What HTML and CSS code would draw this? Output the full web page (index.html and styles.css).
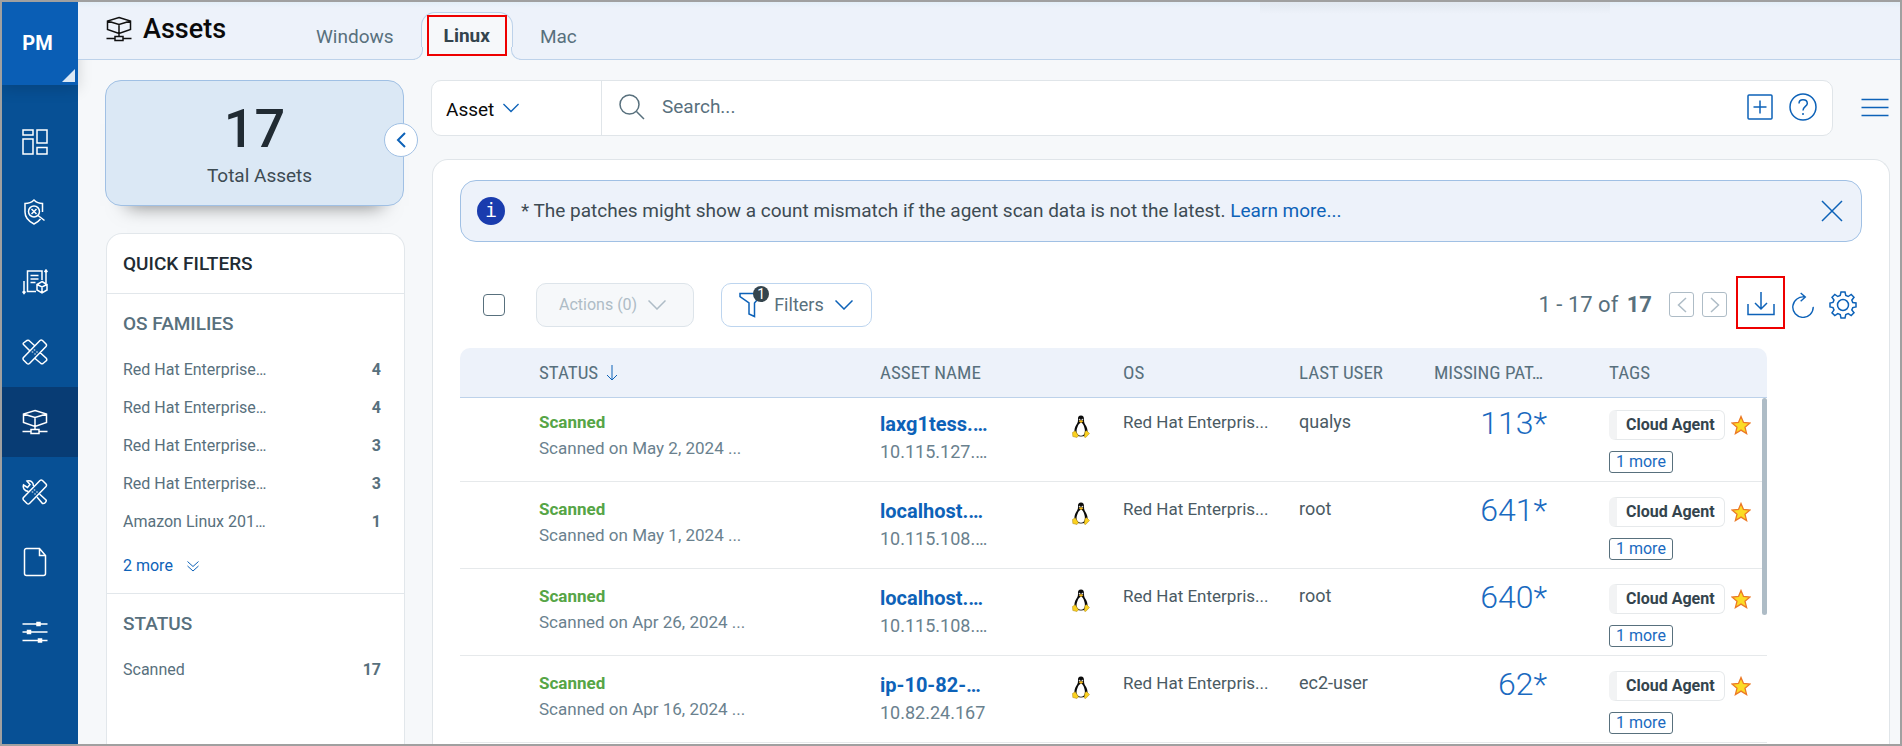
FILE: index.html
```
<!DOCTYPE html>
<html lang="en">
<head>
    <meta charset="UTF-8">
    <meta name="viewport" content="width=device-width, initial-scale=1.0">
    <title>Assets</title>
    <link rel="stylesheet" href="styles.css">
</head>
<body>

    <!-- shared icons -->
    <svg class="sprite" aria-hidden="true">
        <symbol id="asset" viewBox="0 0 26 26">
            <path d="M13 1.500L24.500 5v8.500L13 17.500 1.500 13.500V5zM1.500 5L13 8.500 24.500 5M13 8.500V20.500M9 20.500h8v4H9zM0.500 22.500H9M17 22.500h8.500"/>
        </symbol>
        <symbol id="chevron" viewBox="0 0 18 10">
            <path d="M0.500 0.500L9 9 17.500 0.500"/>
        </symbol>
        <symbol id="star" viewBox="0 0 20 20">
            <path d="M10 1.500l2.500 6 6.500 0.500-5 4.200 1.600 6.300L10 15.100 4.400 18.500 6 12.200 1 8l6.500-0.500z" fill="#fbdc25" stroke="#ec7a26" stroke-width="1.300"/>
        </symbol>
        <symbol id="linux" viewBox="0 0 18 23">
            <path d="M9 0.500c-2.300 0-3.200 1.600-3 4 .1 2.600-.6 3.600-1.800 5.500C3 12 2.200 14.500 2.500 17c1 3 3.500 4.500 6.500 4.500s5.500-1.500 6.500-4.500c.3-2.500-.7-5-2-7-1.200-1.900-1.500-3-1.500-5.500 0-2.400-.8-4-3-4z" fill="#0b0b0b"/>
            <path d="M9 7.800c-1.500.2-2.500 1.800-3.300 3.700-1 2.300-1.500 4.500-.9 6.500.8 2 2.300 2.700 4.200 2.700s3-.7 3.700-2.700c.5-2 .1-4.200-.7-6.500C11.300 9.600 10.500 7.900 9 7.800z" fill="#fff"/>
            <circle cx="7.600" cy="4.600" r="0.900" fill="#ddd"/>
            <circle cx="10.400" cy="4.600" r="0.900" fill="#ddd"/>
            <path d="M6.800 6.200L9 5l2.400 1.200L9 8z" fill="#f3b91f"/>
            <path d="M0.500 17.500l2.700-1.800 3.300 5-1.500 1.800-4.200-1zM17.500 18.500l-2.800-2.800-1.700.8-.8 5.500 1.500.5z" fill="#fbd11f" stroke="#a9851a" stroke-width="0.500"/>
        </symbol>
    </svg>

    <div class="app">

    <nav class="sidebar">
        <button class="module" type="button">PM</button>
        <a href="#" class="side-link" aria-label="Dashboard">
            <svg viewBox="0 0 26 26"><path d="M1 1h10v5H1zM15 1h10v13H15zM1 10h10v15H1zM15 18.500h10V25H15z"/></svg>
        </a>
        <a href="#" class="side-link" aria-label="Vulnerabilities">
            <svg viewBox="0 0 26 26"><path d="M20.500 13V4.500C16 4.500 14 3 12 1 10 3 7 4.500 3 4.500V13c0 6 4 9.500 9 12 2.500-1.200 5-3 6.500-5"/><circle cx="12" cy="12.500" r="5.500"/><path d="M9.500 10l5 5M14.500 10l-5 5M16 16.500l6.500 5"/></svg>
        </a>
        <a href="#" class="side-link" aria-label="Reports">
            <svg viewBox="0 0 26 26"><path d="M14 22.500H5.500V2H20v9M8.500 6.500h8M8.500 10h8M8.500 13.500h5M2 12v12M0.500 22.500L2 24.500l1.500-2M24 14V1.500M22.500 3L24 1l1.500 2"/><path d="M20 12.500l5 3v5.500l-5 3-5-3v-5.500zM15 15.500l5 2.500 5-2.500M20 18v6"/></svg>
        </a>
        <a href="#" class="side-link" aria-label="Patches">
            <svg viewBox="0 0 26 26"><path d="M5 24.500L1.500 21a2 2 0 0 1 0-2.500L18 1.500a2 2 0 0 1 2.500 0L24 5a2 2 0 0 1 0 2.500L7.500 24.500a2 2 0 0 1-2.500 0zM8 12L1.500 5.500a1 1 0 0 1 0-1.500L5 1.500a2 2 0 0 1 2 0L13 7M18 13.500l6.500 6a2 2 0 0 1 0 2L21 24.500a2 2 0 0 1-2 0L12.500 19"/><path d="M12.500 10.500v1M10.500 12.500v1M15 12.500v1M13 14.500v1"/></svg>
        </a>
        <a href="#" class="side-link active" aria-label="Assets">
            <svg><use href="#asset"/></svg>
        </a>
        <a href="#" class="side-link" aria-label="Jobs">
            <svg viewBox="0 0 26 26"><path d="M5 24.500L1.500 21a2 2 0 0 1 0-2.500L18 1.500a2 2 0 0 1 2.500 0L24 5a2 2 0 0 1 0 2.500L7.500 24.500a2 2 0 0 1-2.500 0z"/><path d="M6.500 12.500C2.500 12 0.500 9 1.500 6l4 2.500 2.500-3-3-3.500c3.500-1.200 6.500 1 6.500 5M17.500 15l6.500 6c1 1.500-1.500 4-3.500 3.500L15 18"/><path d="M12.500 10.500v1M10.500 12.500v1M15 12.500v1M13 14.500v1"/></svg>
        </a>
        <a href="#" class="side-link" aria-label="Documents">
            <svg class="tall" viewBox="0 0 26 30"><path d="M4.500 1.500h13l6 7v18a2 2 0 0 1-2 2h-17a2 2 0 0 1-2-2v-23a2 2 0 0 1 2-2zM17.500 1.500v7h6"/></svg>
        </a>
        <a href="#" class="side-link" aria-label="Configuration">
            <svg viewBox="0 0 26 26"><path d="M0.500 5h25M0.500 13h25M0.500 21.500h25"/><path d="M15 3.500h3v3h-3zM5.500 11.500h3v3h-3zM16.500 20h3v3h-3z" fill="#fff"/></svg>
        </a>
    </nav>

    <div class="page">
        <header class="topbar">
            <h1 class="title"><svg class="title-icon"><use href="#asset"/></svg>Assets</h1>
            <nav class="tabs">
                <a href="#" class="tab">Windows</a>
                <div class="tab-active"><a href="#" class="marked">Linux</a></div>
                <a href="#" class="tab">Mac</a>
            </nav>
        </header>

        <div class="content">
            <aside class="left">
                <div class="total">
                    <strong>17</strong>
                    <span>Total Assets</span>
                    <button class="collapse" type="button" aria-label="Collapse">
                        <svg viewBox="0 0 10 16"><path d="M9 1L2 8l7 7"/></svg>
                    </button>
                </div>

                <div class="filters">
                    <h2>QUICK FILTERS</h2>
                    <section>
                        <h3>OS FAMILIES</h3>
                        <ul>
                            <li><a href="#">Red Hat Enterprise…</a><b>4</b></li>
                            <li><a href="#">Red Hat Enterprise…</a><b>4</b></li>
                            <li><a href="#">Red Hat Enterprise…</a><b>3</b></li>
                            <li><a href="#">Red Hat Enterprise…</a><b>3</b></li>
                            <li><a href="#">Amazon Linux 201…</a><b>1</b></li>
                        </ul>
                        <a href="#" class="more">2 more <svg viewBox="0 0 12 11"><path d="M0.500 0.500L6 5.500l5.500-5M0.500 5L6 10l5.500-5"/></svg></a>
                    </section>
                    <section>
                        <h3>STATUS</h3>
                        <ul>
                            <li><a href="#">Scanned</a><b>17</b></li>
                        </ul>
                    </section>
                </div>
            </aside>

            <main class="main">
                <div class="search-row">
                    <div class="search">
                        <label class="scope">
                            <select aria-label="Search in">
                                <option>Asset</option>
                            </select>
                            <svg class="chev"><use href="#chevron"/></svg>
                        </label>
                        <svg class="icon lens" viewBox="0 0 26 26"><circle cx="10.500" cy="10.500" r="9.500"/><path d="M17.500 17.500l7.500 7.500"/></svg>
                        <input type="text" placeholder="Search..." aria-label="Search">
                        <button class="icon-btn" type="button" aria-label="Add">
                            <svg viewBox="0 0 26 26"><rect x="1" y="1" width="24" height="24" rx="1"/><path d="M13 6.500v13M6.500 13h13"/></svg>
                        </button>
                        <button class="icon-btn" type="button" aria-label="Help">
                            <svg class="big" viewBox="0 0 28 28"><circle cx="14" cy="14" r="13"/><path d="M10 10.500c0-2.500 1.800-3.700 4-3.700s4.300 1.200 4.300 3.700c0 3-4.300 3-4.300 7M14 20v2"/></svg>
                        </button>
                    </div>
                    <button class="icon-btn" type="button" aria-label="Menu">
                        <svg class="big" viewBox="0 0 28 28"><path d="M0.500 5.500h27M0.500 13.500h27M0.500 21.500h27"/></svg>
                    </button>
                </div>

                <div class="card">
                    <div class="banner">
                        <span class="info">i</span>
                        <p>* The patches might show a count mismatch if the agent scan data is not the latest. <a href="#">Learn more...</a></p>
                        <button class="icon-btn" type="button" aria-label="Close">
                            <svg class="close" viewBox="0 0 22 22"><path d="M1 1l20 20M21 1L1 21"/></svg>
                        </button>
                    </div>

                    <div class="toolbar">
                        <input type="checkbox" class="check" aria-label="Select all">
                        <button class="btn btn-actions" type="button" disabled>Actions (0) <svg class="chev"><use href="#chevron"/></svg></button>
                        <button class="btn btn-filters" type="button">
                            <span class="funnel">
                                <svg viewBox="0 0 22 26"><path d="M1 1.500h20v3l-5.500 6.500v13.500l-5.500-2.500v-11L1 4.500z"/></svg>
                                <i class="count">1</i>
                            </span>
                            Filters <svg class="chev"><use href="#chevron"/></svg>
                        </button>
                        <div class="pager">
                            <span class="range">1 - 17 of <b>17</b></span>
                            <button class="page-btn" type="button" aria-label="Previous"><svg viewBox="0 0 10 16"><path d="M9 1L1.500 8 9 15"/></svg></button>
                            <button class="page-btn" type="button" aria-label="Next"><svg viewBox="0 0 10 16"><path d="M1 1l7.500 7L1 15"/></svg></button>
                        </div>
                        <button class="icon-btn marked download" type="button" aria-label="Download">
                            <svg class="big" viewBox="0 0 28 28"><path d="M1 13v10.500h26V13M14 1v17M8 12l6 6 6-6"/></svg>
                        </button>
                        <button class="icon-btn refresh" type="button" aria-label="Refresh">
                            <svg viewBox="0 0 24 28"><path d="M14 5.500A11 11 0 1 0 23 16M9.500 1l5 4.500-5 4.500"/></svg>
                        </button>
                        <button class="icon-btn" type="button" aria-label="Settings">
                            <svg class="big" viewBox="0 0 28 28"><circle cx="14" cy="14" r="5.500"/><path d="M12 1h4l.8 3.500 2.400 1L22.200 3.500 25 6.300 22.800 9.200l1 2.400L27 12v4l-3.200.6-1 2.400L25 21.800 22.200 24.600 19.200 22.600l-2.400 1L16 27h-4l-.8-3.400-2.400-1L5.800 24.600 3 21.800 5 19l-1-2.400L1 16v-4l3-.6 1-2.300L3 6.300 5.800 3.500 8.800 5.500l2.400-1z"/></svg>
                        </button>
                    </div>

                    <div class="table-wrap">
                        <table>
                            <colgroup>
                                <col class="c-check"><col class="c-status"><col class="c-name"><col class="c-icon"><col class="c-os"><col class="c-user"><col class="c-missing"><col>
                            </colgroup>
                            <thead>
                                <tr>
                                    <th></th>
                                    <th>STATUS <svg class="sort" viewBox="0 0 12 16"><path d="M6 0v15M1 10l5 5 5-5"/></svg></th>
                                    <th>ASSET NAME</th>
                                    <th></th>
                                    <th>OS</th>
                                    <th>LAST USER</th>
                                    <th>MISSING PAT…</th>
                                    <th>TAGS</th>
                                </tr>
                            </thead>
                            <tbody>
                                <tr>
                                    <td></td>
                                    <td><b class="state">Scanned</b><span class="sub">Scanned on May 2, 2024 ...</span></td>
                                    <td><a href="#" class="name">laxg1tess.…</a><span class="ip">10.115.127.…</span></td>
                                    <td><svg class="tux"><use href="#linux"/></svg></td>
                                    <td class="os">Red Hat Enterpris...</td>
                                    <td class="user">qualys</td>
                                    <td class="missing"><a href="#">113*</a></td>
                                    <td><div class="tags"><span class="tag">Cloud Agent</span><svg class="star"><use href="#star"/></svg></div><button class="tag-more" type="button">1 more</button></td>
                                </tr>
                                <tr>
                                    <td></td>
                                    <td><b class="state">Scanned</b><span class="sub">Scanned on May 1, 2024 ...</span></td>
                                    <td><a href="#" class="name">localhost.…</a><span class="ip">10.115.108.…</span></td>
                                    <td><svg class="tux"><use href="#linux"/></svg></td>
                                    <td class="os">Red Hat Enterpris...</td>
                                    <td class="user">root</td>
                                    <td class="missing"><a href="#">641*</a></td>
                                    <td><div class="tags"><span class="tag">Cloud Agent</span><svg class="star"><use href="#star"/></svg></div><button class="tag-more" type="button">1 more</button></td>
                                </tr>
                                <tr>
                                    <td></td>
                                    <td><b class="state">Scanned</b><span class="sub">Scanned on Apr 26, 2024 ...</span></td>
                                    <td><a href="#" class="name">localhost.…</a><span class="ip">10.115.108.…</span></td>
                                    <td><svg class="tux"><use href="#linux"/></svg></td>
                                    <td class="os">Red Hat Enterpris...</td>
                                    <td class="user">root</td>
                                    <td class="missing"><a href="#">640*</a></td>
                                    <td><div class="tags"><span class="tag">Cloud Agent</span><svg class="star"><use href="#star"/></svg></div><button class="tag-more" type="button">1 more</button></td>
                                </tr>
                                <tr>
                                    <td></td>
                                    <td><b class="state">Scanned</b><span class="sub">Scanned on Apr 16, 2024 ...</span></td>
                                    <td><a href="#" class="name">ip-10-82-…</a><span class="ip">10.82.24.167</span></td>
                                    <td><svg class="tux"><use href="#linux"/></svg></td>
                                    <td class="os">Red Hat Enterpris...</td>
                                    <td class="user">ec2-user</td>
                                    <td class="missing"><a href="#">62*</a></td>
                                    <td><div class="tags"><span class="tag">Cloud Agent</span><svg class="star"><use href="#star"/></svg></div><button class="tag-more" type="button">1 more</button></td>
                                </tr>
                            </tbody>
                        </table>
                        <div class="thumb"></div>
                    </div>
                </div>
            </main>
        </div>
    </div>

    </div>

</body>
</html>
```
FILE: styles.css
```
* {
    box-sizing: border-box;
}

body {
    margin: 0;
    font-family: Roboto, sans-serif;
    font-size: 18px;
    line-height: 24px;
    color: #3d4b53;
    background-color: #f6f8fa;
}

a {
    color: inherit;
    text-decoration: none;
}

button, input, select {
    font: inherit;
    color: inherit;
    margin: 0;
    padding: 0;
}

button {
    cursor: pointer;
}

svg {
    fill: none;
    stroke: #0d62b8;
    stroke-width: 1.5px;
    flex: none;
}

h1, h2, h3, p, ul {
    margin: 0;
    padding: 0;
}

.sprite {
    position: absolute;
    width: 0;
    height: 0;
}

.app {
    display: flex;
    height: 100vh;
    border: 2px solid #a0a0a0;
    overflow: hidden;
}

/* sidebar */

.sidebar {
    flex: none;
    width: 76px;
    background: #075095;
}

.module {
    position: relative;
    display: block;
    width: 100%;
    height: 83px;
    margin-bottom: 22px;
    padding: 0 5px 2px 0;
    border: 0;
    background: #0a5eb5;
    box-shadow: 0 4px 14px rgba(0, 0, 0, 0.15);
    color: #fff;
    font-size: 20px;
    font-weight: 700;
}

.module::after {
    content: "";
    position: absolute;
    right: 3px;
    bottom: 3px;
    border: 6px solid #dbe8f5;
    border-width: 0 0 13px 13px;
    border-left-color: transparent;
}

.side-link {
    display: flex;
    align-items: center;
    height: 70px;
    padding-left: 20px;
}

.side-link svg {
    width: 26px;
    height: 26px;
    stroke: #fff;
}

.side-link svg.tall {
    height: 30px;
}

.side-link.active {
    background: #083c74;
}

/* header and tabs */

.page {
    flex: 1;
    min-width: 0;
    display: flex;
    flex-direction: column;
}

.topbar {
    position: relative;
    flex: none;
    display: flex;
    align-items: flex-end;
    height: 58px;
    padding-left: 28px;
    border-bottom: 1px solid #bdd2ea;
    background: linear-gradient(#e3eef7, #edf2fa 6px);
}

.topbar::after {
    content: "";
    position: absolute;
    top: 0;
    right: 290px;
    width: 350px;
    height: 12px;
    background: linear-gradient(#e2e8f0, transparent);
}

.title {
    display: flex;
    align-items: center;
    width: 189px;
    height: 58px;
    padding-bottom: 2px;
    color: #0a0a0a;
    font-size: 27px;
    font-weight: 500;
}

.title-icon {
    width: 26px;
    height: 26px;
    margin-right: 11px;
    stroke: #111;
}

.tabs {
    display: flex;
    align-items: flex-end;
    gap: 27px;
    padding-left: 21px;
    color: #58707d;
    font-size: 19px;
}

.tab {
    height: 34px;
}

.tab-active {
    position: relative;
    height: 48px;
    margin-bottom: -1px;
    padding: 2px 5px 0;
    border: 1px solid #bdd2ea;
    border-bottom: 0;
    border-radius: 14px 14px 0 0;
    background: #f6f8fa;
}

.tab-active::before,
.tab-active::after {
    content: "";
    position: absolute;
    bottom: 0;
    width: 11px;
    height: 12px;
    border-bottom: 1px solid #bdd2ea;
    background: #edf2fa;
}

.tab-active::before {
    left: -11px;
    border-right: 1px solid #bdd2ea;
    border-bottom-right-radius: 10px;
    box-shadow: 4px 4px 0 #f6f8fa;
}

.tab-active::after {
    right: -11px;
    border-left: 1px solid #bdd2ea;
    border-bottom-left-radius: 10px;
    box-shadow: -4px 4px 0 #f6f8fa;
}

.tab-active a {
    position: relative;
    z-index: 1;
    display: block;
    height: 41px;
    padding: 7px 15px 0;
    color: #34444d;
    font-weight: 700;
}

.marked {
    border: 2px solid #ee0000;
}

/* left column */

.content {
    flex: 1;
    min-height: 0;
    display: flex;
    gap: 27px;
    padding: 20px 10px 0 27px;
}

.left {
    flex: none;
    display: flex;
    flex-direction: column;
    gap: 27px;
    width: 299px;
}

.total {
    position: relative;
    flex: none;
    display: flex;
    flex-direction: column;
    align-items: center;
    height: 126px;
    padding-top: 20px;
    border: 1px solid #a0c0e4;
    border-radius: 16px;
    background: #dbe8f5;
    box-shadow: 0 22px 18px -22px rgba(0, 0, 0, 0.5);
}

.total strong {
    color: #212b33;
    font-size: 54px;
    line-height: 56px;
    font-weight: 500;
}

.total span {
    padding-left: 10px;
    font-size: 19px;
    line-height: 38px;
}

.collapse {
    position: absolute;
    right: -15px;
    top: 42px;
    display: flex;
    align-items: center;
    justify-content: center;
    width: 34px;
    height: 34px;
    border: 1px solid #a0c0e4;
    border-radius: 50%;
    background: #fff;
}

.collapse svg {
    width: 10px;
    height: 16px;
    stroke-width: 2px;
}

.filters {
    flex: 1;
    margin: 0 -1px 0 1px;
    border: 1px solid #e2e7eb;
    border-bottom: 0;
    border-radius: 16px 16px 0 0;
    background: #fff;
    color: #58707d;
}

.filters h2 {
    padding: 18px 16px 17px;
    color: #212b33;
    font-size: 19px;
    line-height: 24px;
    font-weight: 500;
}

.filters h3 {
    padding: 18px 0 15px;
    font-size: 19px;
    line-height: 24px;
    font-weight: 500;
}

.filters section {
    padding: 0 23px 15px 16px;
    border-top: 1px solid #e2e7eb;
}

.filters ul {
    list-style: none;
    font-size: 16px;
}

.filters li {
    display: flex;
    justify-content: space-between;
    line-height: 38px;
}

.more {
    display: flex;
    align-items: center;
    gap: 14px;
    padding-top: 13px;
    color: #0d62b8;
    font-size: 16px;
}

.more svg {
    width: 12px;
    height: 11px;
    stroke-width: 1px;
}

/* search */

.main {
    flex: 1;
    min-width: 0;
    display: flex;
    flex-direction: column;
    gap: 23px;
}

.search-row {
    flex: none;
    display: flex;
    align-items: center;
    gap: 28px;
    padding-right: 1px;
    font-size: 19px;
}

.search {
    flex: 1;
    display: flex;
    align-items: center;
    gap: 16px;
    height: 56px;
    padding: 0 15px 2px 0;
    border: 1px solid #e0e5e9;
    border-radius: 10px;
    background: #fff;
}

.scope {
    display: flex;
    align-items: center;
    gap: 8px;
    width: 170px;
    height: 54px;
    margin-bottom: -2px;
    padding: 3px 0 0 14px;
    border-right: 1px solid #e0e5e9;
    color: #0a0a0a;
}

.scope select {
    appearance: none;
    border: 0;
    background: none;
}

.scope .chev {
    width: 16px;
    margin-bottom: 4px;
}

.lens {
    width: 26px;
    height: 26px;
    margin: 0 1px;
    stroke: #58707d;
}

.search input {
    flex: 1;
    min-width: 0;
    border: 0;
    outline: 0;
    background: none;
}

.search input::placeholder {
    color: #58707d;
    opacity: 1;
}

.icon-btn {
    display: flex;
    align-items: center;
    justify-content: center;
    border: 0;
    background: none;
}

.icon-btn svg {
    width: 26px;
    height: 26px;
}

.icon-btn svg.big {
    width: 28px;
    height: 28px;
}

.icon-btn svg.close {
    width: 22px;
    height: 22px;
}

.chev {
    width: 18px;
    height: 10px;
}

/* main card */

.card {
    flex: 1;
    min-height: 0;
    margin-left: 1px;
    padding: 20px 27px 0;
    border: 1px solid #e0e5e9;
    border-bottom: 0;
    border-radius: 16px 16px 0 0;
    background: #fff;
    overflow: hidden;
}

.banner {
    display: flex;
    align-items: center;
    height: 62px;
    padding: 0 18px 0 16px;
    border: 1px solid #a0c0e4;
    border-radius: 16px;
    background: #edf2fa;
    font-size: 19px;
}

.banner p {
    flex: 1;
    padding-left: 16px;
}

.banner p a {
    color: #0d62b8;
}

.info {
    width: 28px;
    height: 28px;
    border-radius: 50%;
    background: #1a3cae;
    color: #fff;
    font-family: "DejaVu Sans Mono", monospace;
    font-size: 20px;
    line-height: 27px;
    text-align: center;
}

.toolbar {
    display: flex;
    align-items: center;
    height: 57px;
    margin: 34px 5px 15px 23px;
}

.check {
    appearance: none;
    width: 22px;
    height: 22px;
    margin-right: 31px;
    border: 1px solid #58707d;
    border-radius: 4px;
    background: #fff;
}

.btn {
    display: flex;
    align-items: center;
    gap: 11px;
    height: 44px;
    border-radius: 10px;
}

.btn-actions {
    margin-right: 27px;
    padding: 0 27px 0 22px;
    border: 1px solid #dde4ea;
    background: #f6f8fa;
    color: #aebcc6;
    font-size: 16px;
}

.btn-actions svg {
    stroke: #aebcc6;
}

.btn-filters {
    padding: 0 18px 0 15px;
    border: 1px solid #bdd5ef;
    background: #fff;
    color: #58707d;
    font-size: 18px;
}

.funnel {
    position: relative;
    width: 26px;
    height: 26px;
}

.funnel svg {
    width: 22px;
    height: 26px;
}

.count {
    position: absolute;
    top: -6px;
    right: -6px;
    width: 16px;
    height: 16px;
    border-radius: 50%;
    background: #34444d;
    color: #fff;
    font-size: 14px;
    font-style: normal;
    line-height: 16px;
}

.pager {
    display: flex;
    align-items: center;
    gap: 8px;
    margin-left: auto;
}

.range {
    padding-right: 9px;
    color: #58707d;
    font-size: 22px;
}

.range b {
    padding-left: 3px;
}

.page-btn {
    display: flex;
    align-items: center;
    justify-content: center;
    width: 25px;
    height: 25px;
    border: 1px solid #aebcc6;
    border-radius: 3px;
    background: #fff;
}

.page-btn svg {
    width: 10px;
    height: 16px;
    stroke: #aebcc6;
}

.download {
    align-self: flex-start;
    width: 49px;
    height: 53px;
    margin-left: 9px;
    padding-top: 4px;
    border: 2px solid #ee0000;
}

.refresh {
    margin: 0 13px 0 5px;
}

/* table */

.table-wrap {
    position: relative;
    margin-right: 95px;
}

table {
    width: 100%;
    table-layout: fixed;
    border-collapse: separate;
    border-spacing: 0;
}

.c-check { width: 79px; }
.c-status { width: 341px; }
.c-name { width: 192px; }
.c-icon { width: 51px; }
.c-os { width: 176px; }
.c-user { width: 135px; }
.c-missing { width: 175px; }

th {
    height: 50px;
    padding: 0;
    border-bottom: 1px solid #bdd2ea;
    background: #edf2fa;
    color: #58707d;
    font-family: "Roboto Condensed", Roboto, sans-serif;
    font-size: 19px;
    font-weight: 400;
    text-align: left;
    white-space: nowrap;
}

th:first-child {
    border-top-left-radius: 10px;
}

th:last-child {
    border-top-right-radius: 10px;
}

.sort {
    width: 12px;
    height: 16px;
    margin-left: 3px;
    vertical-align: -2px;
    stroke-width: 1px;
}

td {
    padding: 15px 0 8px;
    border-bottom: 1px solid #e6e9eb;
    vertical-align: top;
    white-space: nowrap;
}

tbody tr:first-child td {
    padding-top: 12px;
}

.os, .user {
    color: #4a5a63;
}

.os {
    font-size: 17px;
}

.state {
    display: block;
    color: #56a546;
    font-size: 17px;
}

.sub, .ip {
    display: block;
    line-height: 28px;
    color: #6a818e;
}

.sub {
    font-size: 17px;
}

.name {
    display: block;
    color: #0d62b8;
    font-size: 20px;
    font-weight: 700;
    line-height: 28px;
}

.tux {
    display: block;
    width: 18px;
    height: 23px;
    margin-top: 5px;
    stroke: none;
}

.missing {
    padding-right: 62px;
    text-align: right;
    color: #1a6ac0;
    font-size: 32px;
    font-weight: 300;
    line-height: 26px;
}

.tags {
    display: flex;
    align-items: center;
    gap: 6px;
}

.tag {
    height: 30px;
    padding: 0 9px;
    border: 1px solid #e6e9eb;
    border-left: 8px solid #f2f3f4;
    border-radius: 6px;
    color: #34444d;
    font-size: 16px;
    font-weight: 700;
    line-height: 27px;
}

.star {
    width: 20px;
    height: 20px;
}

.tag-more {
    display: block;
    height: 22px;
    margin-top: 11px;
    padding: 0 6px;
    border: 1px solid #58707d;
    border-radius: 3px;
    background: #fff;
    color: #1a6ac0;
    font-size: 16px;
    line-height: 20px;
}

/* scroll thumb over the right edge of the rows */
.thumb {
    position: absolute;
    top: 50px;
    right: 0;
    width: 5px;
    height: 217px;
    border-radius: 3px;
    background: #aebcc6;
}
```
